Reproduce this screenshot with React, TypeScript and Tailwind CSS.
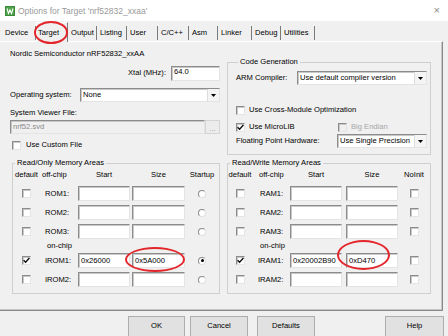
import React from "react";

const edge = "border border-[#8c8c8c] border-b-[#e4e4e4] border-r-[#e4e4e4] shadow-[inset_1px_1px_0_#c8c8c8]";

function Box({ className = "", children }: { className?: string; children?: React.ReactNode }) {
  return (
    <div className={`h-[15px] bg-white ${edge} pl-[2px] flex items-center text-black ${className}`}>
      {children}
    </div>
  );
}

function Check({ checked, disabled }: { checked?: boolean; disabled?: boolean }) {
  return (
    <div className={`w-[9px] h-[9px] shrink-0 ${edge} ${disabled ? "bg-[#f0f0f0]" : "bg-white"} flex items-center justify-center`}>
      {checked && (
        <svg width="7" height="7" viewBox="0 0 7 7">
          <path d="M0.6 3.2 L2.6 5.3 L6.4 1" stroke="#111" strokeWidth="1.4" fill="none" />
        </svg>
      )}
    </div>
  );
}

function Radio({ on }: { on?: boolean }) {
  return (
    <div className="w-[8px] h-[8px] rounded-full bg-white border border-[#8c8c8c] border-b-[#e0e0e0] border-r-[#e0e0e0] flex items-center justify-center">
      {on && <div className="w-[3px] h-[3px] rounded-full bg-black" />}
    </div>
  );
}

function Select({ value, className = "" }: { value: string; className?: string }) {
  return (
    <div className={`h-[14px] bg-white ${edge} flex items-center ${className}`}>
      <span className="flex-1 pl-[2px] truncate">{value}</span>
      <div className="w-[12px] h-full bg-[#f4f4f4] border-l border-[#dcdcdc] flex items-center justify-center">
        <svg width="5" height="3" viewBox="0 0 5 3">
          <path d="M0 0h5L2.5 3z" fill="#000" />
        </svg>
      </div>
    </div>
  );
}

function Group({ title, className = "", children }: { title: string; className?: string; children: React.ReactNode }) {
  return (
    <fieldset className={`border border-[#cfcfcf] ${className}`}>
      <legend className="ml-[2px] px-[2px] leading-[10px]">{title}</legend>
      {children}
    </fieldset>
  );
}

const tabs = [
  { name: "Device", w: "w-[34px]" },
  { name: "Target", w: "w-[32px]" },
  { name: "Output", w: "w-[29px]" },
  { name: "Listing", w: "w-[30px]" },
  { name: "User", w: "w-[31px]" },
  { name: "C/C++", w: "w-[31px]" },
  { name: "Asm", w: "w-[29px]" },
  { name: "Linker", w: "w-[34px]" },
  { name: "Debug", w: "w-[29px]" },
  { name: "Utilities", w: "w-[34px]" },
];

const rom = [
  { label: "ROM1:", start: "", size: "", check: false, radio: false },
  { label: "ROM2:", start: "", size: "", check: false, radio: false },
  { label: "ROM3:", start: "", size: "", check: false, radio: false },
];
const irom = [
  { label: "IROM1:", start: "0x26000", size: "0x5A000", check: true, radio: true },
  { label: "IROM2:", start: "", size: "", check: false, radio: false },
];
const ram = [
  { label: "RAM1:", start: "", size: "", check: false },
  { label: "RAM2:", start: "", size: "", check: false },
  { label: "RAM3:", start: "", size: "", check: false },
];
const iram = [
  { label: "IRAM1:", start: "0x20002B90", size: "0xD470", check: true },
  { label: "IRAM2:", start: "", size: "", check: false },
];

export default function App() {
  return (
    <div className="relative w-[448px] h-[336px] overflow-hidden bg-[#f0f0f0] text-black text-[7.6px] leading-[10px] font-['Liberation_Sans',Arial,sans-serif] flex flex-col">
      {/* Title bar */}
      <div className="h-[21px] bg-white flex items-center shrink-0">
        <svg className="ml-[5px]" width="10" height="10" viewBox="0 0 10 10">
          <rect width="10" height="10" fill="#3a8a3a" />
          <rect x="1" y="1" width="8" height="8" fill="#4fa34a" />
          <path d="M2 2.5 L3.5 7.5 L5 4 L6.5 7.5 L8 2.5" stroke="#fff" strokeWidth="1.1" fill="none" />
        </svg>
        <span className="ml-[3px] text-[8.5px] text-[#9a9a9a]">Options for Target 'nrf52832_xxaa'</span>
        <span className="ml-auto mr-[8px] text-[11px] text-[#8a8a8a] leading-none">×</span>
      </div>

      {/* Tabs */}
      <div className="h-[20px] flex items-end pl-[2px] shrink-0">
        {tabs.map((t) =>
          t.name === "Target" ? (
            <div key={t.name} className={`${t.w} relative z-10 h-[20px] -mb-[1px] bg-[#f0f0f0] border-t border-l border-white border-r border-r-[#7a7a7a] pl-[1px] pt-[5px]`}>
              {t.name}
            </div>
          ) : (
            <div key={t.name} className={`${t.w} h-[14px] mb-[1px] flex items-center pl-[3px] border-r border-[#7a7a7a]`}>
              {t.name}
            </div>
          )
        )}
      </div>

      {/* Panel */}
      <div className="w-[443px] h-[270px] shrink-0 border-t border-white border-r border-b border-r-[#8a8a8a] border-b-[#8a8a8a] shadow-[inset_-1px_-1px_0_#c6c6c6] flex pl-[10px] gap-[7px]">
        {/* Left column */}
        <div className="w-[210px] flex flex-col">
          <div className="mt-[6px] h-[11px] flex items-center">Nordic Semiconductor nRF52832_xxAA</div>
          <div className="mt-[7px] h-[14px] flex items-center justify-end">
            <span>Xtal (MHz):</span>
            <Box className="ml-[5px] w-[49px] h-[14px] items-start">64.0</Box>
          </div>
          <div className="mt-[8px] h-[14px] flex items-center justify-between">
            <span>Operating system:</span>
            <Select value="None" className="w-[140px]" />
          </div>
          <div className="mt-[6px] h-[10px] flex items-center">System Viewer File:</div>
          <div className="mt-[2px] h-[14px] flex">
            <div className={`flex-1 h-[14px] bg-[#f0f0f0] ${edge} pl-[2px] flex items-center text-[#8a8a8a]`}>nrf52.svd</div>
            <div className="w-[15px] h-[14px] bg-[#ececec] border border-[#d4d4d4] flex items-end justify-center text-[#9a9a9a] leading-[8px]">...</div>
          </div>
          <div className="mt-[6px] h-[10px] flex items-center ml-[2px] gap-[5px]">
            <Check />
            <span>Use Custom File</span>
          </div>

          <Group title="Read/Only Memory Areas" className="mt-[8px] ml-[2px] h-[136px]">
            <div className="flex h-[14px] items-center">
              <div className="w-[27px] text-center">default</div>
              <div className="w-[38px] pl-[2px]">off-chip</div>
              <div className="w-[52px] text-center">Start</div>
              <div className="w-[53px] ml-[2px] text-center">Size</div>
              <div className="flex-1 text-center">Startup</div>
            </div>
            <div className="mt-[2px]">
              {rom.map((r) => (
                <div key={r.label} className="flex items-center h-[19px]">
                  <div className="w-[27px] flex justify-center"><Check checked={r.check} /></div>
                  <div className="w-[38px] pl-[5px]">{r.label}</div>
                  <Box className="w-[52px]">{r.start}</Box>
                  <Box className="w-[53px] ml-[2px]">{r.size}</Box>
                  <div className="flex-1 flex justify-center"><Radio on={r.radio} /></div>
                </div>
              ))}
              <div className="h-[10px] flex items-center pl-[34px]">on-chip</div>
              {irom.map((r) => (
                <div key={r.label} className="flex items-center h-[19px]">
                  <div className="w-[27px] flex justify-center"><Check checked={r.check} /></div>
                  <div className="w-[38px] pl-[5px]">{r.label}</div>
                  <Box className="w-[52px]">{r.start}</Box>
                  <Box className="w-[53px] ml-[2px]">{r.size}</Box>
                  <div className="flex-1 flex justify-center"><Radio on={r.radio} /></div>
                </div>
              ))}
            </div>
          </Group>
        </div>

        {/* Right column */}
        <div className="w-[204px] flex flex-col">
          <Group title="Code Generation" className="mt-[15px] h-[98px] pl-[8px] pr-[3px]">
            <div className="mt-[4px] h-[14px] flex items-center">
              <span className="w-[61px]">ARM Compiler:</span>
              <Select value="Use default compiler version" className="flex-1" />
            </div>
            <div className="mt-[20px] h-[10px] flex items-center gap-[4px]">
              <Check />
              <span>Use Cross-Module Optimization</span>
            </div>
            <div className="mt-[7px] h-[10px] flex items-center">
              <div className="w-[102px] flex items-center gap-[4px]">
                <Check checked />
                <span>Use MicroLIB</span>
              </div>
              <div className="flex items-center gap-[4px] text-[#a6a6a6]">
                <Check disabled />
                <span>Big Endian</span>
              </div>
            </div>
            <div className="mt-[2px] h-[14px] flex items-center">
              <span className="w-[101px]">Floating Point Hardware:</span>
              <Select value="Use Single Precision" className="flex-1" />
            </div>
          </Group>

          <Group title="Read/Write Memory Areas" className="mt-[3px] h-[136px]">
            <div className="flex h-[14px] items-center">
              <div className="w-[24px] text-center">default</div>
              <div className="w-[38px] pl-[7px]">off-chip</div>
              <div className="w-[52px] text-center">Start</div>
              <div className="w-[52px] ml-[4px] text-center">Size</div>
              <div className="flex-1 text-center">NoInit</div>
            </div>
            <div className="mt-[2px]">
              {ram.map((r) => (
                <div key={r.label} className="flex items-center h-[19px]">
                  <div className="w-[24px] flex justify-center"><Check checked={r.check} /></div>
                  <div className="w-[38px] pl-[8px]">{r.label}</div>
                  <Box className="w-[52px]">{r.start}</Box>
                  <Box className="w-[52px] ml-[4px]">{r.size}</Box>
                  <div className="flex-1 flex justify-center"><Check /></div>
                </div>
              ))}
              <div className="h-[10px] flex items-center pl-[32px]">on-chip</div>
              {iram.map((r) => (
                <div key={r.label} className="flex items-center h-[19px]">
                  <div className="w-[24px] flex justify-center"><Check checked={r.check} /></div>
                  <div className="w-[38px] pl-[6px]">{r.label}</div>
                  <Box className="w-[52px]">{r.start}</Box>
                  <Box className="w-[52px] ml-[4px]">{r.size}</Box>
                  <div className="flex-1 flex justify-center"><Check /></div>
                </div>
              ))}
            </div>
          </Group>
        </div>
      </div>

      {/* Buttons */}
      <div className="flex pt-[5px] shrink-0">
        {[
          { t: "OK", c: "ml-[128px] w-[57px]" },
          { t: "Cancel", c: "ml-[5px] w-[58px]" },
          { t: "Defaults", c: "ml-[9px] w-[58px]" },
          { t: "Help", c: "ml-[70px] w-[59px]" },
        ].map((b) => (
          <div key={b.t} className={`${b.c} h-[21px] bg-[#e1e1e1] border border-[#adadad] flex justify-center pt-[4px]`}>
            {b.t}
          </div>
        ))}
      </div>

      {/* Red annotation ellipses */}
      <div className="absolute z-20 left-[34px] top-[21px] w-[34px] h-[23px] rounded-[50%] border-2 border-[#e3262b]" />
      <div className="absolute z-20 left-[125px] top-[247px] w-[60px] h-[25px] rounded-[50%] border-2 border-[#e3262b]" />
      <div className="absolute z-20 left-[337px] top-[240px] w-[53px] h-[30px] rounded-[50%] border-2 border-[#e3262b]" />
    </div>
  );
}
